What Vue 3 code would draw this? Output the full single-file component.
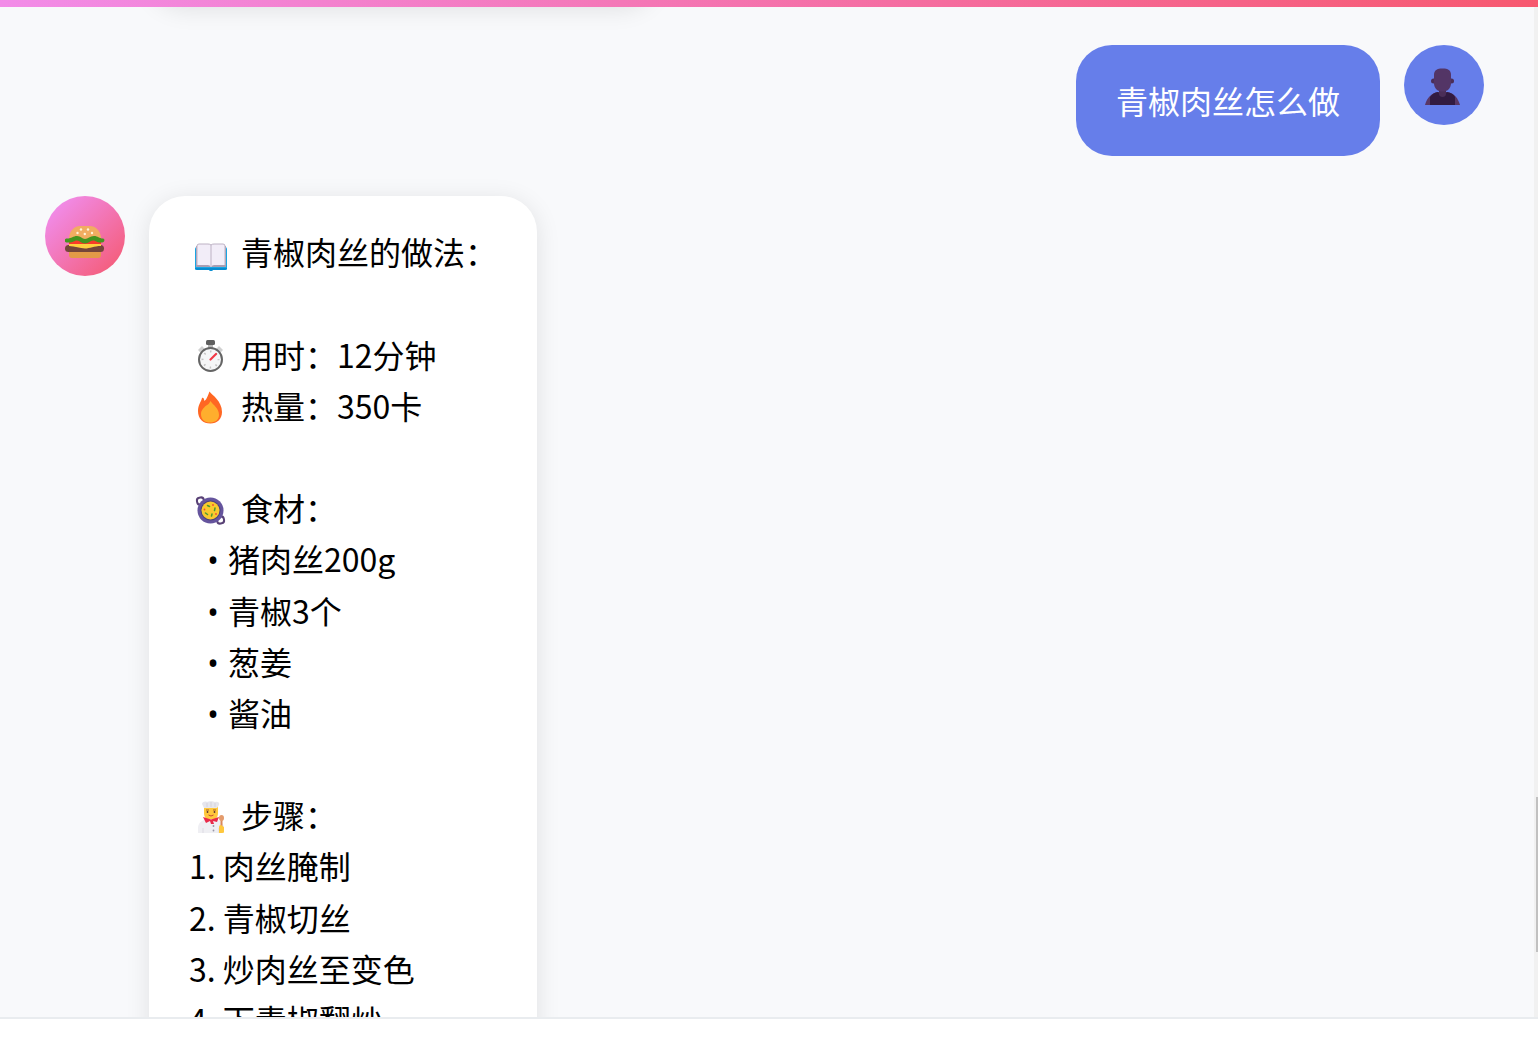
<template>
  <div class="chat-page">
    <header class="chat-header"></header>

    <main class="chat-messages">
      <div class="message-list">
        <!-- Earlier reply, scrolled out of view -->
        <div class="message">
          <div class="bubble previous"></div>
        </div>

        <div class="message user">
          <div class="bubble">{{ question }}</div>
          <div class="avatar">
            <svg width="40" height="44" viewBox="0 0 40 44" aria-hidden="true">
              <path d="M1 42C3 34 8 30 14 29H23C30 30 34 35 36 42Z" fill="#593765" />
              <path d="M6 42V34C8 31 11 29.5 14 29L18.500 33L23 29C27 29.500 30 31.500 31 34V42Z" fill="#321b41" />
              <path d="M15 25H22V31C22 35 15 35 15 31Z" fill="#4b2e58" />
              <circle cx="9.500" cy="18" r="2.500" fill="#4b2e58" />
              <circle cx="27.500" cy="18" r="2.500" fill="#4b2e58" />
              <path d="M10 12C10 7 13 5.500 18.500 5.500S27 7 27 12V20C27 26 23 28.500 18.500 28.500S10 26 10 20Z" fill="#533566" />
            </svg>
          </div>
        </div>

        <div class="message bot">
          <div class="avatar">
            <svg width="40" height="44" viewBox="0 0 40 44" aria-hidden="true">
              <path d="M4 37H36V41Q36 44 33 44H7Q4 44 4 41Z" fill="#e39a48" />
              <path d="M4 25C4 16 10 12 15 12H25C30 12 36 16 36 25Z" fill="#f1ad61" />
              <rect x="4" y="26" width="32" height="6" fill="#f83a29" />
              <rect x="0" y="31" width="39" height="7" rx="3.500" fill="#75453a" />
              <path d="M4 30H36V32C29 32 25 34.500 20 34.500S10 32 4 32Z" fill="#ffd03e" />
              <path d="M2 28.500C-1 28.500 -1 24.500 2 24.500C7 24.500 8 22 12 22S17 25 20 25S25 22 29 22S34 24.500 38 24.500C40 24.500 40 28.500 37 28.500C32 29 31 26.500 28 26.500S24 29.500 20 29.500S15 26.500 12 26.500S8 29 2 28.500Z" fill="#45941f" />
              <g fill="#fff4d8">
                <circle cx="16" cy="15.500" r="1.200" />
                <circle cx="23" cy="15.500" r="1.200" />
                <circle cx="12.500" cy="19" r="1.200" />
                <circle cx="19.800" cy="20" r="1.200" />
                <circle cx="27" cy="19" r="1.200" />
              </g>
            </svg>
          </div>

          <div class="bubble">
            <div class="line">
              <svg class="icon" viewBox="0 0 44 40" aria-hidden="true">
                <path d="M6 17Q6 15 8 15H36Q38 15 38 17V37Q38 38 36 38H24Q22 40 20 38H8Q6 38 6 37Z" fill="#19a5e4" />
                <path d="M6 36H38V37L36 38H24Q22 40 20 38H8L6 37Z" fill="#078bd0" />
                <path d="M7 14H37V35H7Z" fill="#a99eb3" />
                <path d="M8 14Q8 12 10 12H19Q21 12 22 13Q23 12 25 12H34Q36 12 36 14V33H25Q23 33 22 35Q21 33 19 33H8Z" fill="#f2edf8" />
                <path d="M8 33V14Q8 12 10 12H19Q21 12 22 13Q23 12 25 12H34Q36 12 36 14V33M22 13V34" fill="none" stroke="#bdb2c4" />
              </svg>
              <span>{{ recipe.name }}的做法：</span>
            </div>
            <div class="line"></div>

            <div class="line">
              <svg class="icon" viewBox="0 0 44 40" aria-hidden="true">
                <path d="M9 16L13 12L16 15L12 19ZM34 16L30 12L27 15L31 19Z" fill="#d0d0d0" />
                <rect x="19" y="9" width="5" height="5" fill="#b5b5b5" />
                <rect x="17" y="6" width="9" height="5" rx="1.500" fill="#5f5f5f" />
                <circle cx="21.500" cy="25.500" r="11.500" fill="#f5f6f7" stroke="#656565" stroke-width="2" />
                <circle cx="21.500" cy="25.500" r="8" fill="none" stroke="#c4c4c4" stroke-width="2" stroke-dasharray="1.500 4.783" stroke-dashoffset="0.750" />
                <path d="M21.500 25.500L27 20" stroke="#f33845" stroke-width="2.200" stroke-linecap="round" />
              </svg>
              <span>用时：{{ recipe.minutes }}分钟</span>
            </div>
            <div class="line">
              <svg class="icon" viewBox="0 0 44 40" aria-hidden="true">
                <path d="M20.500 6.500C23 10 33 16 33 27C33 34 28 38.500 21.500 38.500C14 38.500 9 34 9 26C9 20 12 17 13 13C14 12 15 13 15.500 16C18 14 19 10 20.500 6.500Z" fill="#ff6723" />
                <path d="M21.500 16C24 20 30 23 30 30C30 35 26 37.500 21 37.500S12 35 12 29C12 25 15 23 16.500 21C19 20 20.500 18 21.500 16Z" fill="#ffae2d" />
              </svg>
              <span>热量：{{ recipe.calories }}卡</span>
            </div>
            <div class="line"></div>

            <div class="line">
              <svg class="icon" viewBox="0 0 44 40" aria-hidden="true">
                <rect x="8" y="9.500" width="7" height="7" rx="3" fill="none" stroke="#594276" stroke-width="2" transform="rotate(-12 11.500 13)" />
                <rect x="28" y="28.500" width="7" height="7" rx="3" fill="none" stroke="#594276" stroke-width="2" transform="rotate(-12 31.500 32)" />
                <circle cx="21.500" cy="22.500" r="13" fill="#65549d" />
                <circle cx="21.500" cy="22.500" r="10" fill="#4c427a" />
                <circle cx="21.500" cy="22.500" r="9" fill="#f9c92e" />
                <path d="M18.500 17.500L20.500 18.500M26 20L25.500 22.500M16.500 25L18.500 26.500M23 26L22.500 28" stroke="#4c9a30" stroke-width="1.500" stroke-linecap="round" />
                <g fill="#f34b32">
                  <circle cx="24" cy="17" r="0.900" />
                  <circle cx="15.500" cy="21.500" r="0.900" />
                  <circle cx="27" cy="26" r="0.900" />
                </g>
              </svg>
              <span>食材：</span>
            </div>
            <ul class="ingredients">
              <li v-for="ingredient in recipe.ingredients" :key="ingredient" class="line">
                <span class="bullet">•</span>{{ ingredient }}
              </li>
            </ul>
            <div class="line"></div>

            <div class="line">
              <svg class="icon" viewBox="0 0 44 40" aria-hidden="true">
                <path d="M15 11H29V18C29 23 26 25 22 25S15 23 15 18Z" fill="#ffc83d" />
                <path d="M15 13L13 9C13 7 16 6 18 7C20 6 24 6 26 7C29 6 31 8 30 10L28 13Z" fill="#e6e6ed" />
                <path d="M18 8V12M22 7V12M26 8V12" stroke="#d4d2dc" />
                <path d="M17 15H20M24 15H27" stroke="#a5602a" stroke-width="1.200" />
                <circle cx="18.500" cy="17" r="0.900" fill="#5a3430" />
                <circle cx="25.500" cy="17" r="0.900" fill="#5a3430" />
                <path d="M19.500 20Q22 22 24.500 20" fill="none" stroke="#c94b32" />
                <path d="M9 38V33C9 27 14 25 18 24H26C31 25 35 28 35 33V38Z" fill="#efeff3" />
                <path d="M14 33V38M30 33V38" stroke="#dddbe3" />
                <path d="M14 22L22 24.500L30 22L28 27L24 26L25 29H22L21 26L17 28Z" fill="#e92b4a" />
                <g fill="#9896a5">
                  <circle cx="24.500" cy="31" r="0.900" />
                  <circle cx="24.500" cy="35.500" r="0.900" />
                </g>
                <path d="M32.500 25V33" stroke="#d9885b" stroke-width="2" />
                <ellipse cx="32.500" cy="23" rx="2.500" ry="3" fill="#e49b6c" />
                <path d="M30 32Q30 30 32 30L35 32V37Q35 38 33 38H30Z" fill="#ffc83d" />
              </svg>
              <span>步骤：</span>
            </div>
            <div v-for="(step, index) in recipe.steps" :key="step" class="line">
              {{ index + 1 }}. {{ step }}
            </div>
          </div>
        </div>
      </div>

      <div class="scroll-track">
        <div class="scroll-thumb"></div>
      </div>
    </main>

    <footer class="chat-footer"></footer>
  </div>
</template>

<script setup>
const question = '青椒肉丝怎么做';

const recipe = {
  name: '青椒肉丝',
  minutes: 12,
  calories: 350,
  ingredients: ['猪肉丝200g', '青椒3个', '葱姜', '酱油'],
  steps: ['肉丝腌制', '青椒切丝', '炒肉丝至变色', '下青椒翻炒'],
};
</script>

<style>
body {
  margin: 0;
}
</style>

<style scoped>
.chat-page {
  height: 100vh;
  display: flex;
  flex-direction: column;
  background: #fff;
  color: #000;
  font-family: "Noto Sans CJK SC", sans-serif;
  font-size: 32px;
  line-height: 1.6;
}

.chat-header {
  flex: 0 0 7px;
  background: linear-gradient(90deg, #f28ce8, #f7586f);
}

.chat-messages {
  flex: 1;
  min-height: 0;
  position: relative;
  overflow: hidden;
  background: #f8f9fb;
}

.message-list {
  display: flex;
  flex-direction: column;
  gap: 40px;
  margin-top: -82px;
  padding: 0 54px 0 45px;
}

.message {
  display: flex;
  align-items: flex-start;
  gap: 24px;
}

.message.user {
  justify-content: flex-end;
}

.avatar {
  flex: 0 0 80px;
  height: 80px;
  border-radius: 50%;
  display: flex;
  align-items: center;
  justify-content: center;
  background: #667eea;
}

.bot .avatar {
  background: linear-gradient(135deg, #f093fb, #f5576c);
}

.bubble {
  padding: 30px 40px;
  border-radius: 36px;
  background: #fff;
  box-shadow: 0 4px 24px rgba(0, 0, 0, 0.1);
}

.bubble.previous {
  box-sizing: border-box;
  width: 508px;
  height: 80px;
  margin-left: 104px;
}

.user .bubble {
  background: #667eea;
  color: #fff;
  box-shadow: none;
}

.line {
  display: flex;
  align-items: center;
  height: 1.6em;
  white-space: nowrap;
}

.icon {
  width: 44px;
  height: 40px;
  margin-right: 8px;
}

.ingredients {
  list-style: none;
  margin: 0;
  padding: 0 0 0 18px;
}

.ingredients .line {
  align-items: baseline;
}

.bullet {
  width: 21px;
  font-family: "Open Sans", sans-serif;
}

.scroll-track {
  position: absolute;
  top: 0;
  right: 0;
  bottom: 0;
  width: 4px;
  background: #f1f1f1;
}

.scroll-thumb {
  position: absolute;
  right: 0;
  bottom: 65px;
  width: 2px;
  height: 155px;
  background: #c1c1c1;
}

.chat-footer {
  flex: 0 0 25px;
  border-top: 2px solid #e9ecef;
  background: #fff;
}
</style>
